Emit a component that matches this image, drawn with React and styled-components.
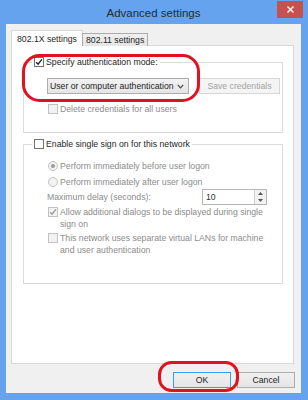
import React from 'react';
import styled, { createGlobalStyle } from 'styled-components';

const GlobalStyle = createGlobalStyle`
  html, body {
    margin: 0;
    padding: 0;
    background: #66a3ee;
  }
  * {
    box-sizing: border-box;
  }
`;

const Window = styled.div`
  position: relative;
  width: 308px;
  height: 400px;
  background: #66a3ee;
  display: flex;
  flex-direction: column;
  padding: 0 7px 7px 6px;
  font-family: "Liberation Sans", Arial, sans-serif;
  font-size: 8.7px;
  color: #1e1e1e;
`;

const TitleBar = styled.div`
  height: 24px;
  display: grid;
  grid-template-columns: 1fr auto 1fr;
  align-items: start;
`;

const Title = styled.div`
  grid-column: 2;
  font-size: 11.5px;
  line-height: 26px;
  color: #2a2a2a;
`;

const CloseButton = styled.div`
  grid-column: 3;
  justify-self: end;
  width: 26px;
  height: 17px;
  margin: 1px -2px 0 0;
  background: #c75050;
  display: flex;
  align-items: center;
  justify-content: center;
`;

const Client = styled.div`
  flex: 1;
  display: flex;
  flex-direction: column;
  background: #f0f0f0;
  padding: 6px 7px 0 5px;
`;

const TabRow = styled.div`
  display: flex;
  align-items: flex-end;
  height: 16px;
  margin-bottom: -1px;
  position: relative;
  z-index: 1;
`;

const Tab = styled.div`
  height: ${(p) => (p.$active ? '16px' : '13px')};
  width: ${(p) => (p.$active ? '72px' : '66px')};
  margin-left: ${(p) => (p.$active ? '0' : '-1px')};
  padding-left: ${(p) => (p.$active ? '5px' : '3px')};
  display: flex;
  align-items: center;
  background: ${(p) => (p.$active ? '#ffffff' : 'linear-gradient(#f0f0f0, #e5e5e5)')};
  border: 1px solid ${(p) => (p.$active ? '#d9d9d9' : '#acacac')};
  border-bottom: none;
  white-space: nowrap;
`;

const Panel = styled.div`
  flex: 1;
  background: #ffffff;
  border: 1px solid #d9d9d9;
  padding: 10px 10px 0 11px;
  display: flex;
  flex-direction: column;
  gap: 5px;
`;

const Group = styled.fieldset`
  margin: 0;
  border: 1px solid #dcdcdc;
  padding: 0 2px ${(p) => p.$bottom}px 8px;
  min-width: 0;
`;

const Legend = styled.legend`
  padding: 0 2px;
  display: flex;
  align-items: center;
  gap: 2px;
  height: 12px;
  line-height: 12px;
  color: #1e1e1e;
`;

const GroupBody = styled.div`
  padding-left: 15px;
  padding-top: ${(p) => p.$top}px;
  display: flex;
  flex-direction: column;
  gap: ${(p) => p.$gap}px;
`;

const Row = styled.div`
  display: flex;
  align-items: ${(p) => (p.$top ? 'flex-start' : 'center')};
  gap: 2px;
  height: ${(p) => (p.$height ? `${p.$height}px` : 'auto')};
  margin-top: ${(p) => (p.$space ? `${p.$space}px` : '0')};
  padding-left: 1px;
  line-height: 12px;
  color: ${(p) => (p.$disabled ? '#8c8c8c' : '#1e1e1e')};
`;

const Box = styled.span`
  flex: none;
  width: 10px;
  height: 10px;
  margin-top: ${(p) => (p.$top ? '1px' : '0')};
  border: 1px solid ${(p) => (p.$disabled ? '#c2c2c2' : '#707070')};
  background: ${(p) => (p.$disabled ? '#f2f2f2' : '#ffffff')};
  display: flex;
  align-items: center;
  justify-content: center;
`;

const RadioCircle = styled(Box)`
  border-radius: 50%;
`;

const Dot = styled.span`
  width: 4px;
  height: 4px;
  border-radius: 50%;
  background: #9a9a9a;
`;

const Select = styled.div`
  width: 142px;
  height: 16px;
  border: 1px solid #acacac;
  background: linear-gradient(#f2f2f2, #e5e5e5);
  display: flex;
  align-items: center;
  justify-content: space-between;
  padding: 0 4px 0 2px;
`;

const FlatButton = styled.div`
  width: ${(p) => p.$width}px;
  height: 16px;
  border: 1px solid ${(p) => (p.$disabled ? '#d6d6d6' : p.$default ? '#3c9ee8' : '#acacac')};
  background: ${(p) => (p.$disabled ? '#f4f4f4' : 'linear-gradient(#f0f0f0, #e5e5e5)')};
  color: ${(p) => (p.$disabled ? '#a3a3a3' : '#1e1e1e')};
  display: flex;
  align-items: center;
  justify-content: center;
`;

const SelectRow = styled.div`
  display: flex;
  gap: 10px;
`;

const DelayRow = styled.div`
  display: flex;
  align-items: center;
  justify-content: space-between;
  padding-right: 13px;
  color: #8c8c8c;
  height: 16px;
`;

const Spin = styled.div`
  width: 65px;
  height: 16px;
  border: 1px solid #b5b5b5;
  background: #ffffff;
  display: flex;
  color: #333;
`;

const SpinValue = styled.span`
  flex: 1;
  padding-left: 3px;
  line-height: 14px;
`;

const SpinArrows = styled.div`
  width: 12px;
  border-left: 1px solid #d0d0d0;
  display: flex;
  flex-direction: column;
  align-items: center;
  justify-content: space-around;
  background: #f2f2f2;
`;

const Lines = styled.span`
  display: flex;
  flex-direction: column;
`;

const Footer = styled.div`
  display: flex;
  justify-content: flex-end;
  gap: 6px;
  padding: 8px 0 5px;
  margin-right: -1px;
`;

const Annotation = styled.svg`
  position: absolute;
  left: ${(p) => p.$x}px;
  top: ${(p) => p.$y}px;
  overflow: visible;
  pointer-events: none;
`;

const Check = ({ color }) => (
  <svg width="8" height="8" viewBox="0 0 8 8">
    <path d="M1.2 4.2 L3.1 6.2 L6.9 1.4" fill="none" stroke={color} strokeWidth="1.4" />
  </svg>
);

const Ring = ({ x, y, w, h, r }) => (
  <Annotation $x={x} $y={y} width={w} height={h}>
    <rect x="1.5" y="1.5" width={w - 3} height={h - 3} rx={r} fill="none" stroke="#e3101f" strokeWidth="3" />
  </Annotation>
);

const App = () => {
  return (
    <Window>
      <GlobalStyle />
      <TitleBar>
        <Title>Advanced settings</Title>
        <CloseButton>
          <svg width="7" height="7" viewBox="0 0 7 7">
            <path d="M0.5 0.5 L6.5 6.5 M6.5 0.5 L0.5 6.5" stroke="#ffffff" strokeWidth="1.4" />
          </svg>
        </CloseButton>
      </TitleBar>
      <Client>
        <TabRow>
          <Tab $active>802.1X settings</Tab>
          <Tab>802.11 settings</Tab>
        </TabRow>
        <Panel>
          <Group $bottom={17}>
            <Legend>
              <Box>
                <Check color="#222" />
              </Box>
              Specify authentication mode:
            </Legend>
            <GroupBody $top={10} $gap={9}>
              <SelectRow>
                <Select>
                  <span>User or computer authentication</span>
                  <svg width="7" height="5" viewBox="0 0 7 5">
                    <path d="M0.8 0.8 L3.5 3.8 L6.2 0.8" fill="none" stroke="#444" strokeWidth="1.2" />
                  </svg>
                </Select>
                <FlatButton $width={81} $disabled>Save credentials</FlatButton>
              </SelectRow>
              <Row $disabled>
                <Box $disabled />
                Delete credentials for all users
              </Row>
            </GroupBody>
          </Group>
          <Group $bottom={27}>
            <Legend>
              <Box />
              Enable single sign on for this network
            </Legend>
            <GroupBody $top={8} $gap={0}>
              <Row $disabled $height={16}>
                <RadioCircle $disabled>
                  <Dot />
                </RadioCircle>
                Perform immediately before user logon
              </Row>
              <Row $disabled $height={15}>
                <RadioCircle $disabled />
                Perform immediately after user logon
              </Row>
              <DelayRow>
                <span>Maximum delay (seconds):</span>
                <Spin>
                  <SpinValue>10</SpinValue>
                  <SpinArrows>
                    <svg width="5" height="3" viewBox="0 0 5 3">
                      <path d="M0 3 L2.5 0 L5 3 Z" fill="#555" />
                    </svg>
                    <svg width="5" height="3" viewBox="0 0 5 3">
                      <path d="M0 0 L2.5 3 L5 0 Z" fill="#555" />
                    </svg>
                  </SpinArrows>
                </Spin>
              </DelayRow>
              <Row $disabled $top $space={1}>
                <Box $disabled $top>
                  <Check color="#9a9a9a" />
                </Box>
                <Lines>
                  <span>Allow additional dialogs to be displayed during single</span>
                  <span>sign on</span>
                </Lines>
              </Row>
              <Row $disabled $top $space={2}>
                <Box $disabled $top />
                <Lines>
                  <span>This network uses separate virtual LANs for machine</span>
                  <span>and user authentication</span>
                </Lines>
              </Row>
            </GroupBody>
          </Group>
        </Panel>
        <Footer>
          <FlatButton $width={58} $default>OK</FlatButton>
          <FlatButton $width={58}>Cancel</FlatButton>
        </Footer>
      </Client>
      <Ring x={22} y={54} w={178} h={48} r={16} />
      <Ring x={158} y={361} w={81} h={31} r={12} />
    </Window>
  );
};

export default App;
